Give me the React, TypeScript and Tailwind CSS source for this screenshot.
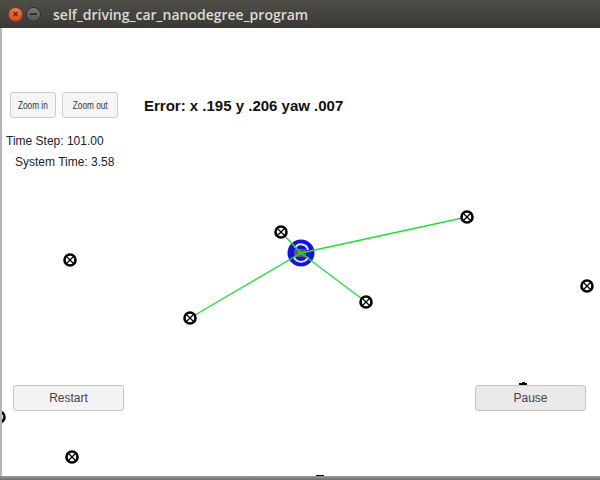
import React from "react";

const landmarks: [number, number][] = [
  [70, 260],
  [281, 232],
  [467, 217],
  [366, 302],
  [190, 318],
  [587, 286],
  [72, 457],
  [-1, 417],
];

function Landmark({ x, y }: { x: number; y: number }) {
  return (
    <g>
      <circle cx={x} cy={y} r={5.5} fill="white" stroke="black" strokeWidth={2.6} />
      <line x1={x - 3} y1={y - 3} x2={x + 3} y2={y + 3} stroke="black" strokeWidth={1.2} />
      <line x1={x - 3} y1={y + 3} x2={x + 3} y2={y - 3} stroke="black" strokeWidth={1.2} />
    </g>
  );
}

function MapCanvas() {
  const car = { x: 301, y: 253 };
  const targets: [number, number][] = [
    [467, 217],
    [281, 232],
    [366, 302],
    [190, 318],
  ];
  return (
    <svg className="absolute inset-0" width="598" height="452" viewBox="2 28 598 452">
      <circle cx={car.x} cy={car.y} r={13.5} fill="#1414d8" />
      <path d="M 295 248 A 7 7 0 0 1 308 250" fill="none" stroke="#e8e8f8" strokeWidth={2} />
      <path d="M 294 257 A 7.5 7.5 0 0 0 308 257" fill="none" stroke="#e8e8f8" strokeWidth={2} />
      <rect x={car.x - 7} y={car.y - 4} width={12} height={8} rx={2} fill="#5a5a7a" />
      <circle cx={car.x - 1} cy={car.y} r={2.5} fill="#8a7a5a" />
      {targets.map(([x, y], i) => (
        <line key={i} x1={car.x} y1={car.y} x2={x} y2={y} stroke="#22dd33" strokeWidth={1.3} />
      ))}
      {landmarks.map(([x, y], i) => (
        <Landmark key={i} x={x} y={y} />
      ))}
      <rect x={519} y={383} width={8} height={2} fill="black" />
      <rect x={522} y={382} width={3} height={1} fill="black" />
      <rect x={316} y={475} width={8} height={2} fill="black" />
    </svg>
  );
}

export default function App() {
  return (
    <div className="w-[600px] h-[480px] overflow-hidden flex flex-col bg-white" style={{ fontFamily: '"Liberation Sans", Arial, sans-serif' }}>
      <div className="h-[28px] shrink-0 flex items-center bg-gradient-to-b from-[#4f4e49] to-[#3a3935] pl-[8px]">
        <div className="w-[15px] h-[15px] rounded-full bg-gradient-to-b from-[#f2774a] to-[#dd4814] border border-[#8a3a1a] flex items-center justify-center text-[9px] leading-none text-[#3a1a0a] font-bold">
          ×
        </div>
        <div className="ml-[3px] w-[15px] h-[15px] rounded-full bg-gradient-to-b from-[#7a7974] to-[#55544f] border border-[#2e2d2a] flex items-center justify-center">
          <div className="w-[7px] h-[2px] bg-[#2e2d2a]" />
        </div>
        <div className="ml-[12px] text-[14px] font-semibold text-[#dfdbd2]" style={{ fontFamily: '"Open Sans", "DejaVu Sans", sans-serif' }}>
          self_driving_car_nanodegree_program
        </div>
      </div>
      <div className="relative flex-1 border-l-2 border-[#b4b4b4]">
        <MapCanvas />
        <div className="relative flex flex-col h-full">
          <div className="flex items-center mt-[64px] ml-[8px]">
            <button className="w-[46px] h-[26px] rounded-[3px] border border-[#cdcdcd] bg-[#f5f5f5] text-[11px] text-[#333] flex items-center justify-center">
              <span className="inline-block scale-x-75 whitespace-nowrap">Zoom in</span>
            </button>
            <button className="ml-[6px] w-[56px] h-[26px] rounded-[3px] border border-[#cdcdcd] bg-[#f5f5f5] text-[11px] text-[#333] flex items-center justify-center">
              <span className="inline-block scale-x-75 whitespace-nowrap">Zoom out</span>
            </button>
            <div className="ml-[26px] mt-[2px] text-[15px] font-bold text-[#111]">Error: x .195 y .206 yaw .007</div>
          </div>
          <div className="ml-[4px] mt-[15px] text-[12px] text-[#222] leading-[16px]">Time Step: 101.00</div>
          <div className="ml-[13px] mt-[5px] text-[12px] text-[#222] leading-[16px]">System Time: 3.58</div>
          <div className="flex-1" />
          <div className="flex justify-between items-center pl-[11px] pr-[14px] mb-[69px]">
            <button className="w-[111px] h-[26px] rounded-[3px] border border-[#c4c4c4] bg-[#f3f3f3] text-[12px] text-[#444]">
              Restart
            </button>
            <button className="w-[111px] h-[26px] rounded-[3px] border border-[#c4c4c4] bg-[#e9e9e9] text-[12px] text-[#444]">
              Pause
            </button>
          </div>
        </div>
        <div className="absolute left-[-2px] right-0 bottom-0 h-[4px] bg-gradient-to-b from-[#9a9a9a] to-[#6e6e6e]" />
      </div>
    </div>
  );
}
